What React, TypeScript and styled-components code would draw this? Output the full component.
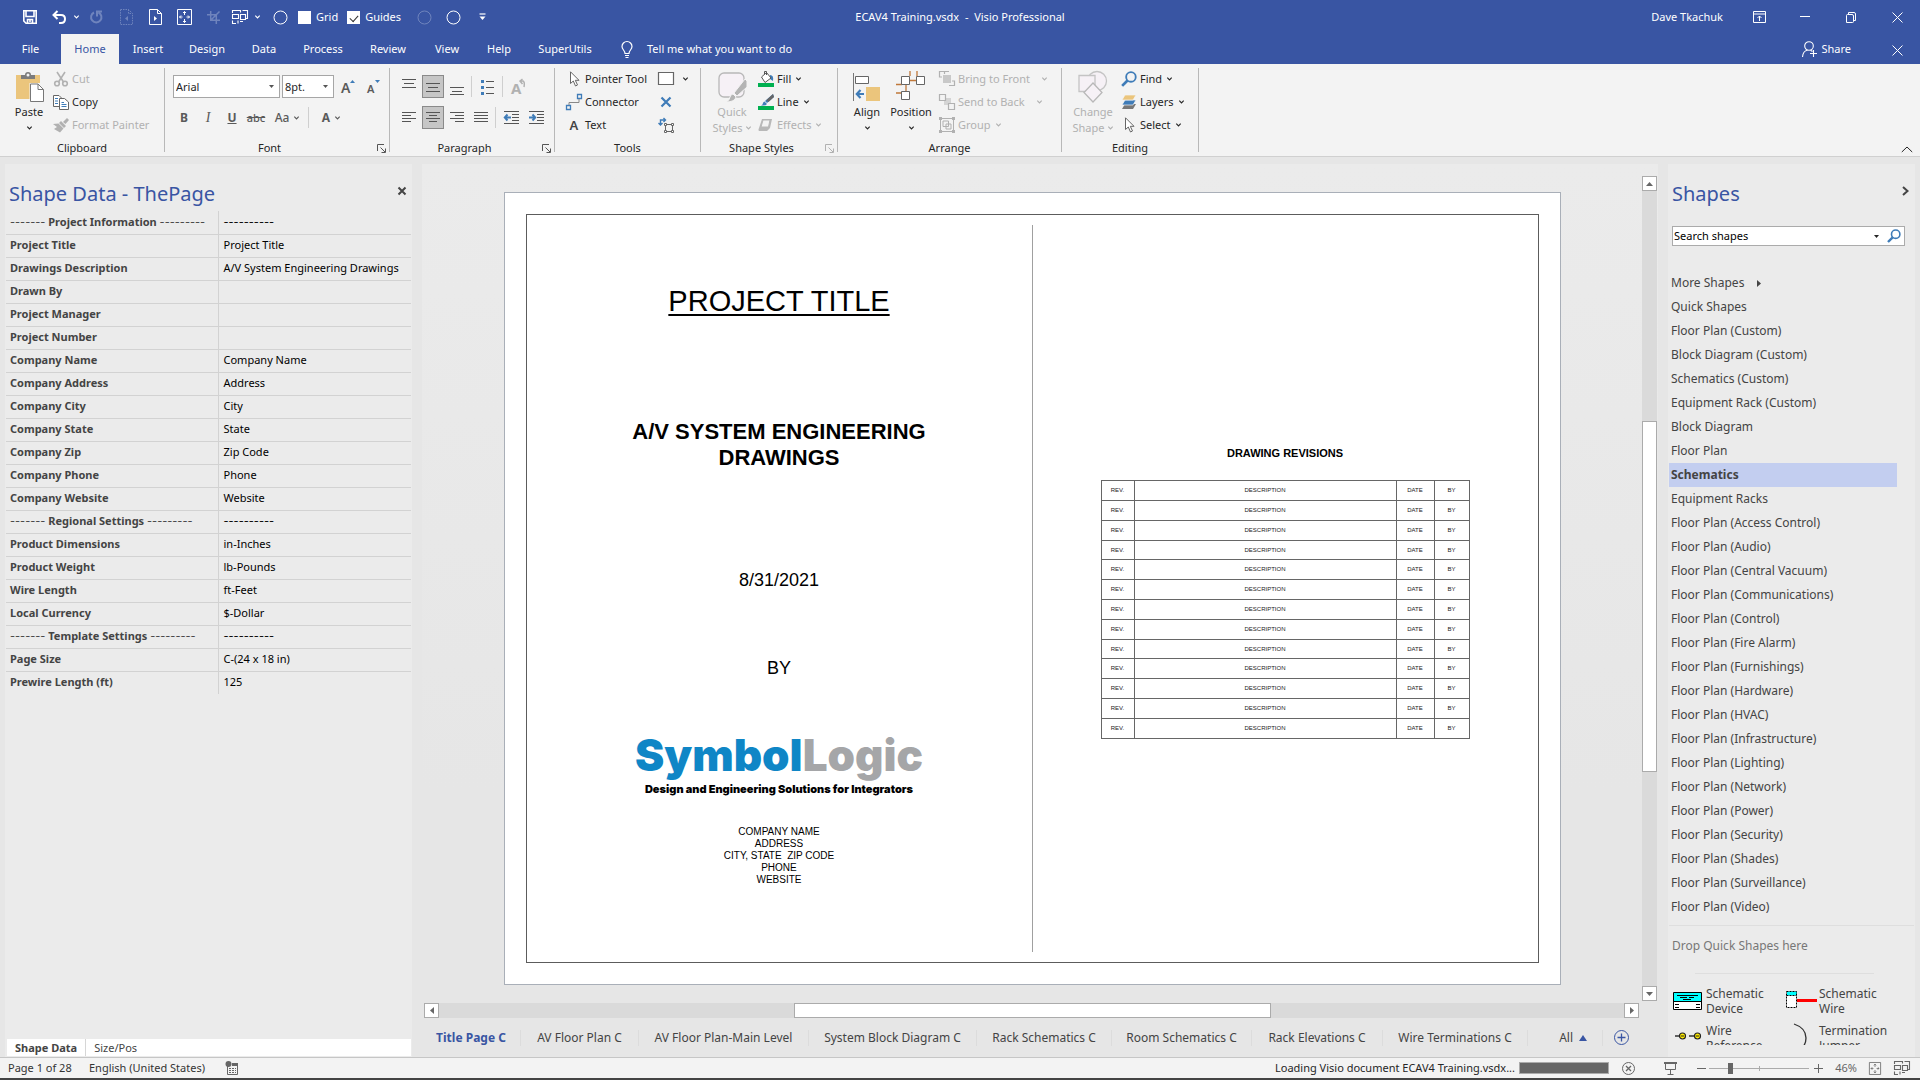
import React from "react";
import styled, { createGlobalStyle, css } from "styled-components";

const BLUE = "#3955a3";
const INK = "#262626";
const GREY = "#b1b1b1";
const UI = '"Noto Sans", "Open Sans", sans-serif';
const ARIAL = '"Liberation Sans", Arial, sans-serif';

const Global = createGlobalStyle`
  *, *::before, *::after { box-sizing: border-box; }
  body { margin: 0; background: #e6e6e6; font-family: ${UI}; font-size: 11px; line-height: 16px; color: ${INK}; }
  button, input, select { font: inherit; color: inherit; }
  button { border: 0; padding: 0; background: none; white-space: nowrap; }
  svg { display: block; flex: none; overflow: visible; }
`;

const Window = styled.div`
  display: flex;
  flex-direction: column;
  height: 100vh;
  overflow: hidden;
`;

/* ---------- title bar ---------- */

const TitleBar = styled.header`
  display: grid;
  grid-template-columns: 1fr auto 1fr;
  align-items: center;
  height: 34px;
  background: ${BLUE};
  color: #fff;
`;
const QuickAccess = styled.div`
  display: flex;
  align-items: center;
  padding-left: 15px;
`;
const QuickButton = styled.button<{ $w?: number; $dim?: boolean }>`
  display: flex;
  align-items: center;
  justify-content: center;
  width: ${(p) => p.$w ?? 29}px;
  height: 24px;
  color: ${(p) => (p.$dim ? "#6f84bd" : "#fff")};
`;
const QuickCheck = styled.label`
  display: flex;
  align-items: center;
  gap: 5px;
  height: 24px;
  margin-right: 9px;
  & input {
    appearance: none;
    display: grid;
    place-items: center;
    width: 13px;
    height: 13px;
    margin: 0;
    background: #fff;
    border: 1px solid #fff;
  }
  & input:checked::before {
    content: "";
    width: 8px;
    height: 5px;
    border: solid #333;
    border-width: 0 0 1px 1px;
    transform: rotate(-48deg);
  }
`;
const WindowControls = styled.div`
  display: flex;
  align-items: center;
  justify-content: flex-end;
`;
const UserName = styled.span`
  margin-right: 13px;
`;
const WindowButton = styled.button`
  display: flex;
  align-items: center;
  justify-content: center;
  width: 46px;
  height: 32px;
  color: #fff;
`;

/* ---------- ribbon tabs ---------- */

const TabBar = styled.nav`
  display: flex;
  align-items: stretch;
  height: 30px;
  background: ${BLUE};
  color: #fff;
`;
const RibbonTab = styled.button<{ $w: number; $active?: boolean }>`
  width: ${(p) => p.$w}px;
  color: ${(p) => (p.$active ? BLUE : "#fff")};
  background: ${(p) => (p.$active ? "#f3f3f3" : "transparent")};
`;
const TellMe = styled.button`
  display: flex;
  align-items: center;
  gap: 14px;
  margin-left: 16px;
  color: #fff;
`;
const ShareButton = styled.button`
  display: flex;
  align-items: center;
  gap: 4px;
  margin: 0 23px 0 auto;
  color: #fff;
`;

/* ---------- ribbon ---------- */

const Ribbon = styled.section`
  display: flex;
  height: 93px;
  background: #f3f3f3;
  border-bottom: 1px solid #d0d0d0;
`;
const Group = styled.div<{ $w: number }>`
  display: flex;
  flex-direction: column;
  flex: none;
  width: ${(p) => p.$w}px;
  padding-top: 3px;
`;
const GroupBody = styled.div<{ $pad: number; $gap?: number }>`
  display: flex;
  gap: ${(p) => p.$gap ?? 3}px;
  height: 69px;
  padding-left: ${(p) => p.$pad}px;
`;
const GroupFooter = styled.div`
  display: flex;
  align-items: center;
  height: 16px;
  margin-top: 4px;
`;
const GroupName = styled.span`
  flex: 1;
  text-align: center;
`;
const Launcher = styled.button<{ $dim?: boolean }>`
  display: grid;
  place-items: center;
  width: 15px;
  height: 15px;
  color: ${(p) => (p.$dim ? GREY : "#555")};
`;
const GroupRule = styled.div`
  flex: none;
  width: 1px;
  margin: 4px 0;
  background: #b8b8b8;
`;
const BigButton = styled.button<{ $w: number; $dim?: boolean }>`
  display: flex;
  flex-direction: column;
  align-items: center;
  width: ${(p) => p.$w}px;
  padding-top: 4px;
  color: ${(p) => (p.$dim ? GREY : INK)};
  & > svg:first-child { margin-bottom: 1px; }
`;
const BigLine = styled.span`
  display: flex;
  align-items: center;
  gap: 4px;
  height: 16px;
`;
const Stack = styled.div<{ $lead?: number }>`
  display: flex;
  flex-direction: column;
  padding-left: ${(p) => p.$lead ?? 0}px;
`;
const SmallButton = styled.button<{ $dim?: boolean; $far?: boolean }>`
  display: flex;
  align-items: center;
  gap: 3px;
  height: 23px;
  color: ${(p) => (p.$dim ? GREY : INK)};
  & > span + svg { margin-left: ${(p) => (p.$far ? 9 : 2)}px; }
`;
const ToolColumns = styled.div`
  display: grid;
  grid-template-columns: 92px auto;
`;
const FormatRows = styled.div`
  display: flex;
  flex-direction: column;
  gap: 8px;
  padding-top: 8px;
`;
const FormatRow = styled.div`
  display: flex;
  align-items: center;
  gap: 2px;
  height: 23px;
`;
const PickerBox = styled.span<{ $w: number }>`
  display: grid;
  align-items: center;
  width: ${(p) => p.$w}px;
  height: 23px;
  background: #fff;
  border: 1px solid #a6a6a6;
  & > select, & > svg { grid-area: 1 / 1; }
  & > svg { justify-self: end; margin-right: 5px; color: #555; pointer-events: none; }
  & > select {
    appearance: none;
    width: 100%;
    height: 21px;
    padding: 0 2px;
    border: 0;
    background: transparent;
  }
`;
const GlyphButton = styled.button<{ $w?: number; $on?: boolean }>`
  display: flex;
  align-items: center;
  justify-content: center;
  gap: 5px;
  width: ${(p) => p.$w ?? 22}px;
  height: 23px;
  color: #5a5a5a;
  ${(p) => p.$on && css`
    background: #c6c6c6;
    border: 1px solid #8a8a8a;
  `}
`;
const Letter = styled.span<{ $kind?: "bold" | "italic" | "underline" | "strike" | "case" }>`
  font-size: ${(p) => (p.$kind === "strike" ? 11 : p.$kind === "italic" ? 14 : 12)}px;
  font-weight: ${(p) => (p.$kind === "italic" || p.$kind === "strike" || p.$kind === "case" ? 500 : 700)};
  font-family: ${(p) => (p.$kind === "italic" ? '"Liberation Serif", serif' : UI)};
  font-style: ${(p) => (p.$kind === "italic" ? "italic" : "normal")};
  text-decoration: ${(p) => (p.$kind === "underline" ? "underline" : p.$kind === "strike" ? "line-through" : "none")};
`;
const ThinRule = styled.i`
  width: 1px;
  height: 21px;
  margin: 0 1px;
  background: #cfcfcf;
`;
const CollapseButton = styled.button`
  align-self: flex-end;
  margin: 0 7px 2px auto;
  height: 9px;
`;

/* ---------- workspace ---------- */

const Workspace = styled.main`
  display: grid;
  grid-template-columns: 407px minmax(0, 1fr) 247px;
  gap: 10px;
  flex: 1;
  min-height: 0;
  padding: 7px 5px 0;
`;
const Pane = styled.aside<{ $size?: number }>`
  display: flex;
  flex-direction: column;
  min-height: 0;
  font-size: ${(p) => p.$size ?? 11}px;
  background: #ebebeb;
`;
const PaneHeader = styled.div`
  display: flex;
  justify-content: space-between;
  height: 47px;
  padding: 16px 5px 0 4px;
`;
const PaneTitle = styled.h2`
  margin: 0;
  color: ${BLUE};
  font-size: 20px;
  font-weight: 400;
  line-height: 28px;
`;
const PaneClose = styled.button`
  align-self: flex-start;
  display: grid;
  place-items: center;
  width: 10px;
  height: 22px;
  color: #444;
`;
const DataTable = styled.table`
  width: 405px;
  margin-left: 1px;
  border-collapse: collapse;
  table-layout: fixed;
  & th, & td {
    height: 23px;
    padding: 0 4px 1px;
    text-align: left;
    white-space: nowrap;
    border-bottom: 1px solid #d2d2d2;
  }
  & th {
    width: 212px;
    color: #444;
    border-right: 1px solid #d2d2d2;
  }
  & td { padding-left: 5px; color: #000; }
  & tr:last-child > * { border-bottom: 0; }
`;
const Dashes = styled.span`
  font-family: Inter, ${UI};
  font-weight: 400;
`;
const PaneTabs = styled.div`
  display: flex;
  height: 17px;
  margin: auto 1px 1px 2px;
  background: #fff;
`;
const PaneTab = styled.button<{ $active?: boolean }>`
  padding: 0 8px;
  color: #444;
  font-weight: ${(p) => (p.$active ? 700 : 400)};
  border-right: ${(p) => (p.$active ? "1px solid #d6d6d6" : "0")};
`;

/* ---------- drawing window ---------- */

const DrawingWindow = styled.section`
  display: grid;
  grid-template-columns: minmax(0, 1fr) 16px;
  grid-template-rows: minmax(0, 1fr) 17px 39px;
  padding-top: 12px;
  background: linear-gradient(#ebebeb, #e6e6e6 70%);
`;
const Canvas = styled.div`
  display: flex;
  justify-content: center;
  align-items: flex-start;
  padding-top: 16px;
  overflow: hidden;
`;
const Sheet = styled.article`
  flex: none;
  width: 1057px;
  padding: 21px;
  background: #fff;
  border: 1px solid #a9afb8;
  font-family: ${ARIAL};
  color: #000;
`;
const Frame = styled.div`
  display: grid;
  grid-template-columns: 1fr 1px 1fr;
  height: 749px;
  border: 1px solid #5c5c5c;
`;
const FrameRule = styled.div`
  margin: 10px 0;
  background: #a0a0a0;
`;
const Cover = styled.div`
  display: flex;
  flex-direction: column;
  align-items: center;
  text-align: center;
  padding-top: 69px;
`;
const ProjectTitle = styled.h1`
  margin: 0;
  font-size: 29px;
  line-height: 34px;
  font-weight: 400;
  text-decoration: underline;
  text-decoration-thickness: 2px;
  text-underline-offset: 3px;
`;
const Subtitle = styled.h2`
  width: 320px;
  margin: 101px 0 0;
  font-size: 22px;
  line-height: 26px;
`;
const CoverLine = styled.p<{ $top: number }>`
  margin: ${(p) => p.$top}px 0 0;
  font-size: 18px;
  line-height: 22px;
`;
const Brand = styled.p`
  margin: 50px 0 0;
  font: 900 44px/52px Inter, ${ARIAL};
  color: #0f86c6;
  & > span { color: #a5a6a8; }
`;
const Tagline = styled.p`
  margin: 1px 0 0;
  font: 900 11px/14px Inter, ${ARIAL};
`;
const CompanyBlock = styled.address`
  margin-top: 30px;
  font-size: 10px;
  line-height: 12px;
  font-style: normal;
  white-space: pre;
`;
const Revisions = styled.div`
  display: flex;
  flex-direction: column;
  align-items: center;
  padding-top: 231px;
`;
const RevisionHeading = styled.h3`
  margin: 0 0 20px;
  font-size: 11px;
  line-height: 14px;
`;
const RevisionTable = styled.table`
  width: 369px;
  border-collapse: collapse;
  table-layout: fixed;
  color: #222;
  & td {
    height: 20px;
    padding: 0 0 1px;
    text-align: center;
    font-size: 6px;
    line-height: 8px;
    border: 1px solid #666;
  }
  & tr:nth-child(5n + 4) td { height: 19px; }
`;

const VScroll = styled.div`
  display: flex;
  flex-direction: column;
  width: 15px;
  background: #dadada;
`;
const HScroll = styled.div`
  display: flex;
  align-self: end;
  height: 15px;
  margin: 0 3px 0 2px;
  background: #dadada;
`;
const ScrollButton = styled.button`
  display: grid;
  place-items: center;
  flex: none;
  width: 15px;
  height: 15px;
  background: #fff;
  border: 1px solid #ababab;
  color: #666;
`;
const ScrollGap = styled.div<{ $share: number }>`
  flex: ${(p) => p.$share};
`;
const ScrollThumb = styled(ScrollGap)`
  background: #fff;
  border: 1px solid #ababab;
`;
const SheetTabs = styled.nav`
  display: flex;
  align-items: center;
  grid-column: 1 / -1;
  font-size: 12px;
`;
const SheetTab = styled.button<{ $w: number; $active?: boolean }>`
  display: flex;
  align-items: center;
  justify-content: center;
  gap: 6px;
  width: ${(p) => p.$w}px;
  height: 16px;
  color: ${(p) => (p.$active ? BLUE : "#444")};
  font-weight: ${(p) => (p.$active ? 700 : 400)};
  border-right: 1px solid #dcdcdc;
  &:last-child { border-right: 0; }
`;
const AllTabs = styled(SheetTab)`
  justify-content: flex-end;
  padding-right: 15px;
`;

/* ---------- shapes pane ---------- */

const SearchBox = styled.form`
  display: flex;
  align-items: center;
  gap: 8px;
  flex: none;
  height: 20px;
  margin: 15px 10px 25px 4px;
  padding-right: 3px;
  background: #fff;
  border: 1px solid #ababab;
  & input {
    flex: 1;
    min-width: 0;
    height: 16px;
    padding: 0 1px;
    border: 0;
    background: transparent;
    color: #000;
    font-size: 11px;
  }
  & input::placeholder { color: #000; opacity: 1; }
`;
const StencilList = styled.ul`
  flex: none;
  margin: 0 18px 0 1px;
  padding: 0 0 6px;
  list-style: none;
`;
const StencilButton = styled.button<{ $active?: boolean }>`
  display: flex;
  align-items: center;
  gap: 13px;
  width: 100%;
  height: 24px;
  padding-left: 2px;
  color: #444;
  font-weight: ${(p) => (p.$active ? 700 : 400)};
  background: ${(p) => (p.$active ? "#c3cef0" : "transparent")};
`;
const DropHint = styled.p`
  flex: none;
  height: 48px;
  margin: 0 1px;
  padding: 12px 3px;
  color: #777;
  border-top: 1px solid #dedede;
`;
const ShortRule = styled.div`
  flex: none;
  height: 1px;
  margin: 0 41px 12px 27px;
  background: #dedede;
`;
const MasterGrid = styled.div`
  display: grid;
  grid-template-columns: 113px 1fr;
  align-content: start;
  row-gap: 7px;
  flex: 1;
  min-height: 0;
  margin: 0 0 12px 5px;
  overflow: hidden;
`;
const Master = styled.button`
  display: grid;
  grid-template-columns: 33px auto;
  align-items: start;
  justify-content: start;
  color: #444;
  line-height: 15px;
  text-align: left;
  white-space: normal;
`;

/* ---------- status bar ---------- */

const StatusBar = styled.footer`
  display: flex;
  align-items: center;
  height: 23px;
  padding: 0 1px 0 8px;
  background: #f3f3f3;
  border-top: 1px solid #c6c6c6;
  border-bottom: 2px solid #444;
`;
const StatusText = styled.span<{ $w?: number }>`
  flex: none;
  width: ${(p) => (p.$w ? `${p.$w}px` : "auto")};
  white-space: nowrap;
  color: #333;
`;
const StatusButton = styled.button<{ $w: number }>`
  display: flex;
  align-items: center;
  justify-content: center;
  width: ${(p) => p.$w}px;
  height: 18px;
  color: #666;
`;
const Loading = styled.label`
  display: flex;
  align-items: center;
  gap: 4px;
  margin-left: auto;
  white-space: nowrap;
`;
const LoadProgress = styled.progress`
  appearance: none;
  width: 90px;
  height: 12px;
  border: 1px solid #ababab;
  &::-webkit-progress-bar { background: #666; }
  &::-webkit-progress-value { background: #666; }
`;
const ZoomSlider = styled.input`
  appearance: none;
  width: 100px;
  height: 16px;
  margin: 0;
  background:
    linear-gradient(#ababab, #ababab) 50% 50% / 1px 5px no-repeat,
    linear-gradient(#ababab, #ababab) 50% 50% / 100% 1px no-repeat;
  &::-webkit-slider-thumb {
    appearance: none;
    width: 5px;
    height: 11px;
    background: #666;
  }
`;

/* ---------- icons ---------- */

type IconProps = { w?: number; h?: number; sw?: number; children: React.ReactNode };
const Icon = ({ w = 16, h = 16, sw = 1, children }: IconProps) => (
  <svg width={w} height={h} viewBox={`0 0 ${w} ${h}`} fill="none" stroke="currentColor" strokeWidth={sw} aria-hidden="true">
    {children}
  </svg>
);

const Chevron = () => <Icon w={5} h={4} sw={1.2}><path d="M.3 .6 2.5 2.8 4.700 .6" /></Icon>;
const Triangle = ({ dir }: { dir: "up" | "down" | "left" | "right" }) => {
  const d = { up: "M0 4 3.500 0 7 4z", down: "M0 0H7L3.500 4z", left: "M4 0V7L0 3.500z", right: "M0 0V7L4 3.500z" }[dir];
  const flat = dir === "up" || dir === "down";
  return <Icon w={flat ? 7 : 4} h={flat ? 4 : 7}><path d={d} fill="currentColor" stroke="none" /></Icon>;
};
const SmallTriangle = () => <Icon w={5} h={3}><path d="M0 0H5L2.500 3z" fill="currentColor" stroke="none" /></Icon>;
const Circle = () => <Icon w={15} h={15}><circle cx="7.5" cy="7.5" r="6.5" /></Icon>;
const SaveIcon = () => (
  <Icon w={14} h={14} sw={1.6}><path d="M.8 .8H13.200V13.200H3L.8 11ZM3 1V6.500H11V1M4.500 13V9.500H9.500V13M7 10V12" /></Icon>
);
const UndoIcon = () => <Icon w={14} h={14} sw={2}><path d="M5.500 1 1.500 5 5.500 9M2 5H9Q13 5 13 9T9 13H7" /></Icon>;
const RedoIcon = () => <Icon w={14} h={14} sw={2}><path d="M5 2.500A5.200 5.200 0 1 0 9.500 2.500M8 6.500V1.500H13" /></Icon>;
const PageIcon = ({ back }: { back?: boolean }) => (
  <Icon w={13} h={16}>
    <path d="M.5 .5H8.500L12.500 4.500V15.500H.5ZM8.500 .5V4.500H12.500" strokeDasharray={back ? "1.500 1" : undefined} />
    <path d={back ? "M8 7V12L5 9.500z" : "M5 7V12L8 9.500z"} fill="currentColor" stroke="none" />
  </Icon>
);
const FitIcon = ({ w = 15, h = 16 }: { w?: number; h?: number }) => (
  <svg width={w} height={h} viewBox="0 0 15 16" fill="none" stroke="currentColor" aria-hidden="true">
    <path d="M.5 .5H14.500V15.500H.5Z" />
    <path d="M7.500 2.500V6M6 4 7.500 2.500 9 4M7.500 13.500V10M6 12 7.500 13.500 9 12M2.500 8H5.500M4 6.500 2.500 8 4 9.500M12.500 8H9.500M11 6.500 12.500 8 11 9.500" />
  </svg>
);
const HashIcon = () => <Icon w={13} h={13} sw={1.5}><path d="M3.700 0V9.300H13M0 3.700H9.300V13M4.500 8.500 12.500 .5" /></Icon>;
const WindowsIcon = () => (
  <Icon w={16} h={14} sw={1.1}>
    <path d="M.5 3V.5H8.500V2.500M.5 4.500H6.500V8.500H.5ZM10.500 .5H15.500V8.500H14M8.500 4.500H13.500V9.500H8.500ZM.5 10.500V13.500H4M6 13.500V10.500M8 11.500H11" />
  </Icon>
);
const CustomizeIcon = () => <Icon w={7} h={8} sw={1.2}><path d="M.5 1H6.500" /><path d="M.5 3.500H6.500L3.500 7z" fill="currentColor" stroke="none" /></Icon>;
const RibbonOptIcon = () => <Icon w={13} h={12}><path d="M.5 .5H12.500V11.500H.5ZM.5 3H12.500M6.500 10V5M4.500 7 6.500 5 8.500 7" /></Icon>;
const CrossIcon = ({ s = 11, sw = 1 }: { s?: number; sw?: number }) => <Icon w={s} h={s} sw={sw}><path d={`M.5 .5 ${s - 0.5} ${s - 0.5}M${s - 0.5} .5 .5 ${s - 0.5}`} /></Icon>;
const MinIcon = () => <Icon w={10} h={11}><path d="M0 4.500H10" /></Icon>;
const RestoreIcon = () => <Icon w={10} h={11}><path d="M.5 3.500Q.5 2.500 1.500 2.500H6Q7.500 2.500 7.500 4V9.500Q7.500 10.500 6.500 10.500H.5ZM2.500 2.500V.5H8Q9.500 .5 9.500 2V8.500H7.500" /></Icon>;
const BulbIcon = () => <Icon w={12} h={17} sw={1.2}><path d="M4 12.500C4 9.500 1 8.500 1 5.500A5 5 0 0 1 11 5.500C11 8.500 8 9.500 8 12.500ZM4 14.500H8M4.500 16.500H7.500" /></Icon>;
const ShareIcon = () => <Icon w={15} h={16} sw={1.1}><circle cx="7" cy="5" r="4.300" /><path d="M.5 16Q1 9.800 5.500 9.200M8.500 9.200 10.500 10.500M11.500 9V16M8 12.500H15" /></Icon>;

const PasteIcon = () => (
  <Icon w={28} h={32}>
    <path d="M1 4H25V28H1Z" fill="#ebc57c" stroke="none" />
    <path d="M6 8V4H10Q10 1 13 1T16 4H20V8Z" fill="#7c7c7c" stroke="none" />
    <circle cx="13" cy="4" r="1.500" fill="#f3f3f3" stroke="none" />
    <path d="M14.500 12H29V32H14.500Z" fill="#f3f3f3" stroke="none" />
    <path d="M15.500 13H23L28.500 18.500V30.500H15.500Z" fill="#fff" stroke="#777" />
    <path d="M23 13V18.500H28.500" stroke="#777" />
  </Icon>
);
const CutIcon = () => <Icon sw={1.6}><path d="M4 1 10.500 11M12 1 5.500 11" /><circle cx="4" cy="12.500" r="2.300" /><circle cx="12" cy="12.500" r="2.300" /></Icon>;
const CopyIcon = () => (
  <Icon>
    <path d="M.5 1.500H6L8.500 4V12.500H.5Z" fill="#fff" stroke="#666" />
    <path d="M6.500 4.500H11.500L15.500 8V15.500H6.500Z" fill="#fff" stroke="#666" />
    <path d="M2 4.500H5M2 7H5M2 9.500H5M8.500 8.500H11M8.500 10.500H13.500M8.500 12.500H13.500" stroke="#3f7cb8" />
  </Icon>
);
const PainterIcon = () => <Icon><path d="M10 5 14 1 16 3 12.500 7ZM8 4 13 9 11 11 6 6ZM0 7 5.500 6.500 10.500 11.500 7 15.500 1 12 4 10Z" fill="currentColor" stroke="none" /></Icon>;
const GrowIcon = ({ down }: { down?: boolean }) => (
  <Icon w={14} h={16}>
    <text x="0" y="14" fill="currentColor" stroke="none" fontSize={down ? 11 : 14} fontWeight="600">A</text>
    <path d={down ? "M8 1H13L10.500 4z" : "M9 4H14L11.500 1z"} fill="#3f7cb8" stroke="none" />
  </Icon>
);
const LinesIcon = ({ kind }: { kind: "top" | "middle" | "bottom" | "left" | "center" | "right" | "justify" | "dedent" | "indent" | "bullets" }) => {
  const d = {
    top: "M0 .5H14M2 4.500H12M0 8.500H14",
    middle: "M0 4.500H14M2 8.500H12M0 12.500H14",
    bottom: "M0 8.500H14M2 12.500H12M0 15.500H14",
    left: "M0 2.500H14M0 5.500H9M0 8.500H14M0 11.500H9",
    center: "M0 2.500H14M3 5.500H11M0 8.500H14M3 11.500H11",
    right: "M0 2.500H14M5 5.500H14M0 8.500H14M5 11.500H14",
    justify: "M0 2.500H14M0 5.500H14M0 8.500H14M0 11.500H14",
    dedent: "M0 1.500H15M8 4.500H15M8 7.500H15M8 10.500H15M0 13.500H15",
    indent: "M0 1.500H15M8 4.500H15M8 7.500H15M8 10.500H15M0 13.500H15",
    bullets: "M6 2.500H14M6 8.500H14M6 14.500H14",
  }[kind];
  return (
    <Icon w={kind.endsWith("dent") ? 15 : 14}>
      <path d={d} stroke="#555" />
      {kind === "dedent" && <path d="M7 7.500H1M3.500 4.500 .8 7.500 3.500 10.500" stroke="#3f7cb8" strokeWidth="2" />}
      {kind === "indent" && <path d="M0 7.500H6M3.500 4.500 6.200 7.500 3.500 10.500" stroke="#3f7cb8" strokeWidth="2" />}
      {kind === "bullets" && <path d="M1 1H4V4H1ZM1 7H4V10H1ZM1 13H4V16H1Z" fill="#3f7cb8" stroke="none" />}
    </Icon>
  );
};
const RotateTextIcon = () => (
  <Icon w={15} h={16}>
    <text x="0" y="15" fill="#b1b1b1" stroke="none" fontSize="15" fontWeight="700">A</text>
    <path d="M9 2H12Q14 3 13 8M11.500 0 9 2 11.500 5" stroke="#b1b1b1" strokeWidth="1.500" />
  </Icon>
);
const ArrowCursor = () => <Icon><path d="M4.500 .8V12.500L7.300 10 9.500 15 11.500 14 9.300 9.300H13Z" fill="#fff" stroke="#666" /></Icon>;
const ConnectorIcon = () => <Icon><path d="M.5 11.500H4.500V15.500H.5ZM11.500 .5H15.500V4.500H11.500Z" stroke="#3f7cb8" strokeWidth="1.300" /><path d="M3 11V8.500H13V5" stroke="#888" /></Icon>;
const TextIcon = () => <Icon><text x="3.500" y="12.500" fill="#444" stroke="none" fontSize="13" fontWeight="600">A</text></Icon>;
const RectIcon = () => <Icon w={17} h={13}><path d="M.5 .5H15.500V12.500H.5Z" fill="#fff" stroke="#666" strokeWidth="1.200" /></Icon>;
const XPointIcon = () => <Icon w={17}><path d="M3.500 3.500 12.500 12.500M12.500 3.500 3.500 12.500" stroke="#3f7cb8" strokeWidth="2.200" /></Icon>;
const TextBlockIcon = () => (
  <Icon w={17}>
    <path d="M7.500 7.500H14.500V14.500H7.500Z" stroke="#666" />
    <path d="M6.500 6.500H8.500V8.500H6.500ZM13.500 6.500H15.500V8.500H13.500ZM6.500 13.500H8.500V15.500H6.500ZM13.500 13.500H15.500V15.500H13.500Z" fill="#fff" stroke="#666" />
    <path d="M2.500 8V3H7M.5 6 2.500 8 4.500 6M5.500 1 7.500 3 5.500 5" stroke="#3f7cb8" strokeWidth="1.400" />
  </Icon>
);
const QuickStylesIcon = () => (
  <Icon w={30} h={32}>
    <rect x="2" y="2" width="25" height="24" rx="5" fill="#f6f1f6" stroke="#b8b8b8" strokeWidth="1.300" />
    <path d="M28 8 30 10V16L20 25 17 22ZM16 23 19 26Q18 31 9 31 13 29 13 26 14 23 16 23Z" fill="#b4b4b4" stroke="#f3f3f3" />
  </Icon>
);
const FillIcon = () => <Icon><path d="M12 4Q16 4 15 10L12 8Z" fill="#3f7cb8" stroke="none" /><path d="M3.500 6 8.500 1.500 13 7 7 11.500ZM6.500 3.500V.5H8.500V4" fill="#fff" stroke="#555" /><path d="M0 12H16V16H0Z" fill="#00b050" stroke="none" /></Icon>;
const LineIcon = () => <Icon><path d="M15 0 16 3 9 9 7 7ZM6.500 7.500 9 10Q8 12 3 11.500 5 10.500 5 9 5 8 6.500 7.500Z" fill="#3f7cb8" stroke="none" /><path d="M15 0 16 3 10.500 8 8.500 6Z" fill="#666" stroke="none" /><path d="M0 12H16V16H0Z" fill="#00b050" stroke="none" /></Icon>;
const EffectsIcon = () => <Icon><path d="M4 2H14L12 11 9 14H1Q0 13 1 11Z" fill="#b8b8b8" stroke="none" /><path d="M5 3H12L10.500 10H3Z" fill="#f3f3f3" stroke="#b8b8b8" /></Icon>;
const AlignIcon = () => (
  <Icon w={28} h={32}>
    <path d="M.5 2V30" stroke="#777" />
    <path d="M2.500 5.500H15.500V12.500H2.500Z" fill="#fff" stroke="#666" />
    <path d="M13 16H27V30H13Z" fill="#ebc57c" stroke="none" />
    <path d="M11 23H4M7.500 19 3.800 23 7.500 27" stroke="#3f7cb8" strokeWidth="2.200" />
  </Icon>
);
const PositionIcon = () => (
  <Icon w={30} h={32}>
    <path d="M14 0V5M21 0V5M13 9.500H21M10 14V22M0 13.500H6M0 22H6" stroke="#c0783a" strokeWidth="1.300" />
    <path d="M5.500 5.500H13.500V13.500H5.500ZM20.500 5.500H28.500V13.500H20.500ZM5.500 20.500H13.500V28.500H5.500Z" fill="#fff" stroke="#666" />
  </Icon>
);
const FrontIcon = () => <Icon><path d="M4 4H12V12H4Z" fill="#c8c8c8" stroke="none" /><path d="M5 .5H.5V6H3M10 .5H5.500V3M10 14.500H15.500V10H13" stroke="#b1b1b1" strokeWidth="1.200" /></Icon>;
const BackIcon = () => <Icon><path d="M5 4H12V11H5Z" fill="#d4d4d4" stroke="none" /><path d="M.5 .5H6.500V6.500H.5ZM9.500 9.500H15.500V15.500H9.500Z" fill="#f3f3f3" stroke="#b1b1b1" strokeWidth="1.200" /></Icon>;
const GroupIcon = () => <Icon><path d="M1.500 1.500H14.500V14.500H1.500ZM4 4H9.500V9.500H4ZM7 7H12V12H7Z" stroke="#b1b1b1" /><path d="M0 0H3V3H0ZM13 0H16V3H13ZM0 13H3V16H0ZM13 13H16V16H13Z" fill="#b1b1b1" stroke="none" /></Icon>;
const ChangeShapeIcon = () => (
  <Icon w={30} h={32}>
    <circle cx="19" cy="10" r="9.500" fill="#f6f1f6" stroke="#c4c4c4" strokeWidth="1.300" />
    <path d="M1 4.500H17V20.500H1Z" fill="#f6f1f6" stroke="#c4c4c4" strokeWidth="1.300" />
    <path d="M15 12 24 21.500 15 31 6 21.500Z" fill="#f6f1f6" stroke="#b8b8b8" strokeWidth="1.300" />
  </Icon>
);
const FindIcon = ({ s = 14 }: { s?: number }) => (
  <svg width={s} height={s} viewBox="0 0 14 14" fill="none" stroke="#3f7cb8" strokeWidth="1.600" aria-hidden="true">
    <circle cx="8.700" cy="5.200" r="4.200" /><path d="M5.700 8.300 1 13" strokeWidth="2.400" />
  </svg>
);
const LayersIcon = () => <Icon w={16}><path d="M4 10H15L12 15H1Z" fill="#777" stroke="none" /><path d="M4 6H15L12 11H1Z" fill="#3f7cb8" stroke="#f3f3f3" strokeWidth=".7" /><path d="M4 1H15L12 6H1Z" fill="#ebc57c" stroke="#f3f3f3" strokeWidth=".7" /></Icon>;
const LauncherIcon = () => <Icon w={9} h={9}><path d="M.5 7V.5H7M3.500 3.500 8 8M8.500 4.500V8.500H4.500" /></Icon>;
const CaretUp = () => <Icon w={12} h={7}><path d="M.8 6 6 1 11.200 6" /></Icon>;
const PlusCircle = () => <Icon w={15} h={15}><circle cx="7.500" cy="7.500" r="7" stroke={BLUE} /><path d="M7.500 3.500V11.500M3.500 7.500H11.500" stroke={BLUE} strokeWidth="1.300" /></Icon>;
const MacroIcon = () => (
  <Icon w={14} h={14}>
    <path d="M2.500 5V13.500H12.500V2.500H7" /><path d="M7 2H13V5H7Z" fill="currentColor" stroke="none" />
    <circle cx="3.500" cy="3" r="3" fill="currentColor" stroke="none" />
    <path d="M4 7.500H11M4 9.500H11M4 11.500H11" strokeDasharray="2 1" />
  </Icon>
);
const PresentIcon = () => <Icon w={13} h={13}><path d="M0 1H13" strokeWidth="2" /><path d="M1.500 2V7.500H11.500V2M6.500 8V12M3.500 12.500H9.500" /></Icon>;
const StopIcon = () => <Icon w={13} h={13}><circle cx="6.500" cy="6.500" r="6" /><path d="M4 4 9 9M9 4 4 9" strokeWidth="1.300" /></Icon>;
const PlusIcon = () => <Icon w={9} h={9}><path d="M0 4.500H9M4.500 0V9" /></Icon>;
const MinusIcon = () => <Icon w={9} h={9}><path d="M0 4.500H9" /></Icon>;

const DeviceMaster = () => (
  <Icon w={30} h={30}>
    <path d="M1 7H28V15H1Z" fill="#00ffff" stroke="none" />
    <path d="M1 15H28V23H1Z" fill="#fff" stroke="none" />
    <path d="M.5 6.500H28.500V23.500H.5ZM.5 15.500H28.500" stroke="#000" />
    <path d="M4 9.500H25M7 11.500H14M16 11.500H21M10 13.500H18M2 18.500H6M2 21.500H6M23 18.500H27M23 21.500H27" stroke="#000" />
  </Icon>
);
const WireMaster = () => (
  <Icon w={32} h={30}>
    <path d="M1 5.500H11V9.500H1Z" fill="#00ffff" stroke="none" /><path d="M1 9.500H11V21.500H1Z" fill="#fff" stroke="none" />
    <path d="M.5 5.500H10.500V21.500H.5ZM.5 9.500H10.500" stroke="#000" strokeDasharray="2 1" />
    <path d="M11 14.500H31" stroke="#f00" strokeWidth="3" />
  </Icon>
);
const RefMaster = () => (
  <Icon w={30} h={30}>
    <path d="M2 13H9M16 13H24" stroke="#333" strokeWidth="1.500" />
    <circle cx="9.500" cy="13" r="3" fill="#ffeb00" stroke="#222" strokeWidth="1.200" /><circle cx="24.500" cy="13" r="3" fill="#ffeb00" stroke="#222" strokeWidth="1.200" />
    <path d="M8 13H11M23 13H26" stroke="#222" />
  </Icon>
);
const JumperMaster = () => <Icon w={30} h={30}><path d="M8 1Q20 5 20 15 20 20 17 24" stroke="#333" strokeWidth="1.300" /></Icon>;

/* ---------- data ---------- */

const ribbonTabs: [string, number][] = [
  ["File", 61], ["Home", 58], ["Insert", 58], ["Design", 60], ["Data", 54], ["Process", 64],
  ["Review", 66], ["View", 52], ["Help", 52], ["SuperUtils", 80],
];
const shapeData: [string, string][] = [
  ["------- Project Information ---------", "----------"],
  ["Project Title", "Project Title"],
  ["Drawings Description", "A/V System Engineering Drawings"],
  ["Drawn By", ""],
  ["Project Manager", ""],
  ["Project Number", ""],
  ["Company Name", "Company Name"],
  ["Company Address", "Address"],
  ["Company City", "City"],
  ["Company State", "State"],
  ["Company Zip", "Zip Code"],
  ["Company Phone", "Phone"],
  ["Company Website", "Website"],
  ["------- Regional Settings ---------", "----------"],
  ["Product Dimensions", "in-Inches"],
  ["Product Weight", "lb-Pounds"],
  ["Wire Length", "ft-Feet"],
  ["Local Currency", "$-Dollar"],
  ["------- Template Settings ---------", "----------"],
  ["Page Size", "C-(24 x 18 in)"],
  ["Prewire Length (ft)", "125"],
];
const sheetTabs: [string, number][] = [
  ["Title Page C", 99], ["AV Floor Plan C", 118], ["AV Floor Plan-Main Level", 170], ["System Block Diagram C", 168],
  ["Rack Schematics C", 135], ["Room Schematics C", 140], ["Rack Elevations C", 131], ["Wire Terminations C", 145],
];
const stencils = [
  "More Shapes", "Quick Shapes", "Floor Plan (Custom)", "Block Diagram (Custom)", "Schematics (Custom)",
  "Equipment Rack (Custom)", "Block Diagram", "Floor Plan", "Schematics", "Equipment Racks",
  "Floor Plan (Access Control)", "Floor Plan (Audio)", "Floor Plan (Central Vacuum)", "Floor Plan (Communications)",
  "Floor Plan (Control)", "Floor Plan (Fire Alarm)", "Floor Plan (Furnishings)", "Floor Plan (Hardware)",
  "Floor Plan (HVAC)", "Floor Plan (Infrastructure)", "Floor Plan (Lighting)", "Floor Plan (Network)",
  "Floor Plan (Power)", "Floor Plan (Security)", "Floor Plan (Shades)", "Floor Plan (Surveillance)", "Floor Plan (Video)",
];

/* ---------- parts ---------- */

// Runs of hyphens act as divider rules, so they are set in their own lighter face.
const withDashes = (text: string) =>
  text.split(/(-{3,})/).map((part, i) => (part.startsWith("---") ? <Dashes key={i}>{part}</Dashes> : part));

const RibbonGroup = ({ name, w, pad, gap, launcher, children }: {
  name: string; w: number; pad: number; gap?: number; launcher?: "on" | "dim"; children: React.ReactNode;
}) => (
  <>
    <Group $w={w}>
      <GroupBody $pad={pad} $gap={gap}>{children}</GroupBody>
      <GroupFooter>
        <GroupName>{name}</GroupName>
        {launcher && <Launcher $dim={launcher === "dim"} aria-label={`${name} options`}><LauncherIcon /></Launcher>}
      </GroupFooter>
    </Group>
    <GroupRule />
  </>
);

const Small = ({ icon, text, menu, dim, far }: { icon: React.ReactNode; text: string; menu?: boolean; dim?: boolean; far?: boolean }) => (
  <SmallButton $dim={dim} $far={far}>{icon}<span>{text}</span>{menu && <Chevron />}</SmallButton>
);

const Picker = ({ label, value, w }: { label: string; value: string; w: number }) => (
  <PickerBox $w={w}>
    <select aria-label={label} defaultValue={value}><option>{value}</option></select>
    <SmallTriangle />
  </PickerBox>
);

const RibbonBar = () => (
  <Ribbon>
    <RibbonGroup name="Clipboard" w={164} pad={8}>
      <BigButton $w={42}><PasteIcon /><BigLine>Paste</BigLine><BigLine><Chevron /></BigLine></BigButton>
      <Stack>
        <Small icon={<CutIcon />} text="Cut" dim />
        <Small icon={<CopyIcon />} text="Copy" />
        <Small icon={<PainterIcon />} text="Format Painter" dim />
      </Stack>
    </RibbonGroup>
    <RibbonGroup name="Font" w={224} pad={8} launcher="on">
      <FormatRows>
        <FormatRow>
          <Picker label="Font" value="Arial" w={107} />
          <Picker label="Font size" value="8pt." w={52} />
          <GlyphButton $w={24} aria-label="Grow font"><GrowIcon /></GlyphButton>
          <GlyphButton $w={24} aria-label="Shrink font"><GrowIcon down /></GlyphButton>
        </FormatRow>
        <FormatRow>
          <GlyphButton><Letter $kind="bold">B</Letter></GlyphButton>
          <GlyphButton><Letter $kind="italic">I</Letter></GlyphButton>
          <GlyphButton><Letter $kind="underline">U</Letter></GlyphButton>
          <GlyphButton><Letter $kind="strike">abc</Letter></GlyphButton>
          <GlyphButton $w={36}><Letter $kind="case">Aa</Letter><Chevron /></GlyphButton>
          <ThinRule />
          <GlyphButton $w={38}><Letter>A</Letter><Chevron /></GlyphButton>
        </FormatRow>
      </FormatRows>
    </RibbonGroup>
    <RibbonGroup name="Paragraph" w={164} pad={8} launcher="on">
      <FormatRows>
        <FormatRow>
          <GlyphButton aria-label="Align top"><LinesIcon kind="top" /></GlyphButton>
          <GlyphButton $on aria-label="Align middle"><LinesIcon kind="middle" /></GlyphButton>
          <GlyphButton aria-label="Align bottom"><LinesIcon kind="bottom" /></GlyphButton>
          <ThinRule />
          <GlyphButton $w={24} aria-label="Bullets"><LinesIcon kind="bullets" /></GlyphButton>
          <ThinRule />
          <GlyphButton $w={24} aria-label="Rotate text"><RotateTextIcon /></GlyphButton>
        </FormatRow>
        <FormatRow>
          <GlyphButton aria-label="Align left"><LinesIcon kind="left" /></GlyphButton>
          <GlyphButton $on aria-label="Center"><LinesIcon kind="center" /></GlyphButton>
          <GlyphButton aria-label="Align right"><LinesIcon kind="right" /></GlyphButton>
          <GlyphButton aria-label="Justify"><LinesIcon kind="justify" /></GlyphButton>
          <ThinRule />
          <GlyphButton $w={24} aria-label="Decrease indent"><LinesIcon kind="dedent" /></GlyphButton>
          <GlyphButton aria-label="Increase indent"><LinesIcon kind="indent" /></GlyphButton>
        </FormatRow>
      </FormatRows>
    </RibbonGroup>
    <RibbonGroup name="Tools" w={145} pad={11}>
      <ToolColumns>
        <Small icon={<ArrowCursor />} text="Pointer Tool" />
        <SmallButton aria-label="Rectangle"><RectIcon /><span /><Chevron /></SmallButton>
        <Small icon={<ConnectorIcon />} text="Connector" />
        <SmallButton aria-label="Connection point"><XPointIcon /></SmallButton>
        <Small icon={<TextIcon />} text="Text" />
        <SmallButton aria-label="Text block"><TextBlockIcon /></SmallButton>
      </ToolColumns>
    </RibbonGroup>
    <RibbonGroup name="Shape Styles" w={136} pad={7} gap={2} launcher="dim">
      <BigButton $w={48} $dim><QuickStylesIcon /><BigLine>Quick</BigLine><BigLine>Styles<Chevron /></BigLine></BigButton>
      <Stack>
        <Small icon={<FillIcon />} text="Fill" menu />
        <Small icon={<LineIcon />} text="Line" menu />
        <Small icon={<EffectsIcon />} text="Effects" menu dim />
      </Stack>
    </RibbonGroup>
    <RibbonGroup name="Arrange" w={223} pad={7} gap={0}>
      <BigButton $w={44}><AlignIcon /><BigLine>Align</BigLine><BigLine><Chevron /></BigLine></BigButton>
      <BigButton $w={44}><PositionIcon /><BigLine>Position</BigLine><BigLine><Chevron /></BigLine></BigButton>
      <Stack $lead={6}>
        <Small icon={<FrontIcon />} text="Bring to Front" menu dim far />
        <Small icon={<BackIcon />} text="Send to Back" menu dim far />
        <Small icon={<GroupIcon />} text="Group" menu dim />
      </Stack>
    </RibbonGroup>
    <RibbonGroup name="Editing" w={136} pad={6}>
      <BigButton $w={50} $dim><ChangeShapeIcon /><BigLine>Change</BigLine><BigLine>Shape<Chevron /></BigLine></BigButton>
      <Stack>
        <Small icon={<FindIcon s={16} />} text="Find" menu />
        <Small icon={<LayersIcon />} text="Layers" menu />
        <Small icon={<ArrowCursor />} text="Select" menu />
      </Stack>
    </RibbonGroup>
    <CollapseButton aria-label="Collapse ribbon"><CaretUp /></CollapseButton>
  </Ribbon>
);

const DrawingSheet = () => (
  <Sheet>
    <Frame>
      <Cover>
        <ProjectTitle>PROJECT TITLE</ProjectTitle>
        <Subtitle>A/V SYSTEM ENGINEERING DRAWINGS</Subtitle>
        <CoverLine $top={98}>8/31/2021</CoverLine>
        <CoverLine $top={66}>BY</CoverLine>
        <Brand>Symbol<span>Logic</span></Brand>
        <Tagline>Design and Engineering Solutions for Integrators</Tagline>
        <CompanyBlock>{"COMPANY NAME\nADDRESS\nCITY, STATE  ZIP CODE\nPHONE\nWEBSITE"}</CompanyBlock>
      </Cover>
      <FrameRule />
      <Revisions>
        <RevisionHeading>DRAWING REVISIONS</RevisionHeading>
        <RevisionTable>
          <colgroup><col width="33" /><col width="262" /><col width="38" /><col width="35" /></colgroup>
          <tbody>
            {Array.from({ length: 13 }, (_, i) => (
              <tr key={i}><td>REV.</td><td>DESCRIPTION</td><td>DATE</td><td>BY</td></tr>
            ))}
          </tbody>
        </RevisionTable>
      </Revisions>
    </Frame>
  </Sheet>
);

export default function App() {
  return (
    <Window>
      <Global />
      <TitleBar>
        <QuickAccess>
          <QuickButton aria-label="Save"><SaveIcon /></QuickButton>
          <QuickButton aria-label="Undo"><UndoIcon /></QuickButton>
          <QuickButton $w={6} aria-label="Undo history"><Chevron /></QuickButton>
          <QuickButton $w={33} $dim aria-label="Redo"><RedoIcon /></QuickButton>
          <QuickButton $dim aria-label="Previous page"><PageIcon back /></QuickButton>
          <QuickButton aria-label="Next page"><PageIcon /></QuickButton>
          <QuickButton aria-label="Fit to window"><FitIcon /></QuickButton>
          <QuickButton $dim aria-label="Snap"><HashIcon /></QuickButton>
          <QuickButton $w={23} aria-label="Windows"><WindowsIcon /></QuickButton>
          <QuickButton $w={12} aria-label="Windows menu"><Chevron /></QuickButton>
          <QuickButton $w={35} aria-label="Command"><Circle /></QuickButton>
          <QuickCheck><input type="checkbox" />Grid</QuickCheck>
          <QuickCheck><input type="checkbox" defaultChecked />Guides</QuickCheck>
          <QuickButton $dim aria-label="Command"><Circle /></QuickButton>
          <QuickButton aria-label="Command"><Circle /></QuickButton>
          <QuickButton aria-label="Customize"><CustomizeIcon /></QuickButton>
        </QuickAccess>
        <span>ECAV4 Training.vsdx&nbsp; -&nbsp; Visio Professional</span>
        <WindowControls>
          <UserName>Dave Tkachuk</UserName>
          <WindowButton aria-label="Ribbon display options"><RibbonOptIcon /></WindowButton>
          <WindowButton aria-label="Minimize"><MinIcon /></WindowButton>
          <WindowButton aria-label="Restore"><RestoreIcon /></WindowButton>
          <WindowButton aria-label="Close"><CrossIcon /></WindowButton>
        </WindowControls>
      </TitleBar>
      <TabBar>
        {ribbonTabs.map(([name, w]) => <RibbonTab key={name} $w={w} $active={name === "Home"}>{name}</RibbonTab>)}
        <TellMe><BulbIcon />Tell me what you want to do</TellMe>
        <ShareButton><ShareIcon />Share</ShareButton>
        <WindowButton aria-label="Close document"><CrossIcon /></WindowButton>
      </TabBar>
      <RibbonBar />
      <Workspace>
        <Pane>
          <PaneHeader>
            <PaneTitle>Shape Data - ThePage</PaneTitle>
            <PaneClose aria-label="Close pane"><CrossIcon s={8} sw={2} /></PaneClose>
          </PaneHeader>
          <DataTable>
            <tbody>
              {shapeData.map(([name, value]) => (
                <tr key={name}><th scope="row">{withDashes(name)}</th><td>{withDashes(value)}</td></tr>
              ))}
            </tbody>
          </DataTable>
          <PaneTabs>
            <PaneTab $active>Shape Data</PaneTab>
            <PaneTab>Size/Pos</PaneTab>
          </PaneTabs>
        </Pane>
        <DrawingWindow>
          <Canvas><DrawingSheet /></Canvas>
          <VScroll>
            <ScrollButton aria-label="Scroll up"><Triangle dir="up" /></ScrollButton>
            <ScrollGap $share={230} /><ScrollThumb $share={350} /><ScrollGap $share={214} />
            <ScrollButton aria-label="Scroll down"><Triangle dir="down" /></ScrollButton>
          </VScroll>
          <HScroll>
            <ScrollButton aria-label="Scroll left"><Triangle dir="left" /></ScrollButton>
            <ScrollGap $share={356} /><ScrollThumb $share={475} /><ScrollGap $share={354} />
            <ScrollButton aria-label="Scroll right"><Triangle dir="right" /></ScrollButton>
          </HScroll>
          <SheetTabs>
            {sheetTabs.map(([name, w], i) => <SheetTab key={name} $w={w} $active={i === 0}>{name}</SheetTab>)}
            <AllTabs $w={75}>All<Icon w={8} h={6}><path d="M0 6 4 0 8 6z" fill={BLUE} stroke="none" /></Icon></AllTabs>
            <SheetTab $w={37} aria-label="Insert page"><PlusCircle /></SheetTab>
          </SheetTabs>
        </DrawingWindow>
        <Pane $size={12}>
          <PaneHeader>
            <PaneTitle>Shapes</PaneTitle>
            <PaneClose aria-label="Minimize pane"><Icon w={7} h={8} sw={2}><path d="M1 0 5.500 4 1 8" /></Icon></PaneClose>
          </PaneHeader>
          <SearchBox>
            <input type="text" aria-label="Search shapes" placeholder="Search shapes" />
            <button type="button" aria-label="Search history"><SmallTriangle /></button>
            <button type="button" aria-label="Search"><FindIcon /></button>
          </SearchBox>
          <StencilList>
            {stencils.map((name, i) => (
              <li key={name}>
                <StencilButton $active={name === "Schematics"}>{name}{i === 0 && <Triangle dir="right" />}</StencilButton>
              </li>
            ))}
          </StencilList>
          <DropHint>Drop Quick Shapes here</DropHint>
          <ShortRule />
          <MasterGrid>
            <Master><DeviceMaster /><span>Schematic<br />Device</span></Master>
            <Master><WireMaster /><span>Schematic<br />Wire</span></Master>
            <Master><RefMaster /><span>Wire<br />Reference</span></Master>
            <Master><JumperMaster /><span>Termination<br />Jumper</span></Master>
          </MasterGrid>
        </Pane>
      </Workspace>
      <StatusBar>
        <StatusText $w={81}>Page 1 of 28</StatusText>
        <StatusText $w={134}>English (United States)</StatusText>
        <StatusButton $w={18} aria-label="Macros"><MacroIcon /></StatusButton>
        <Loading>Loading Visio document ECAV4 Training.vsdx...<LoadProgress value={100} max={100} /></Loading>
        <StatusButton $w={38} aria-label="Cancel loading"><StopIcon /></StatusButton>
        <StatusButton $w={46} aria-label="Presentation mode"><PresentIcon /></StatusButton>
        <StatusButton $w={16} aria-label="Zoom out"><MinusIcon /></StatusButton>
        <ZoomSlider type="range" aria-label="Zoom" min={0} max={100} defaultValue={20} />
        <StatusButton $w={18} aria-label="Zoom in"><PlusIcon /></StatusButton>
        <StatusButton $w={38} aria-label="Zoom level">46%</StatusButton>
        <StatusButton $w={20} aria-label="Fit page"><FitIcon w={12} h={13} /></StatusButton>
        <StatusButton $w={34} aria-label="Switch windows"><WindowsIcon /></StatusButton>
      </StatusBar>
    </Window>
  );
}
